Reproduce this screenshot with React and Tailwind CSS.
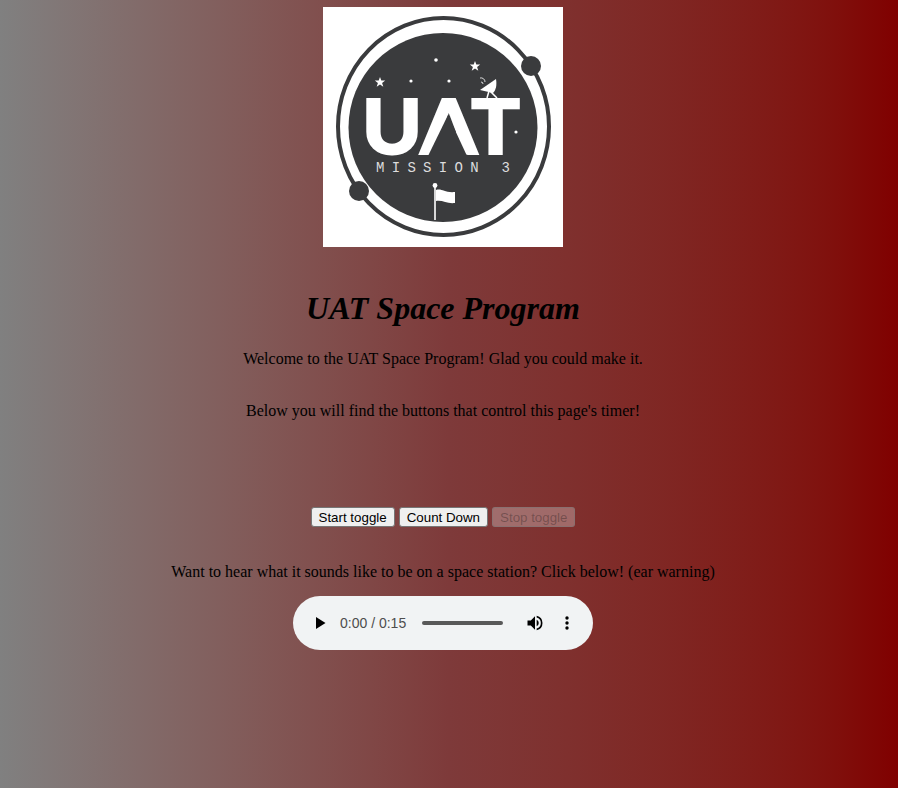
function Logo() {
  return (
    <svg width="240" height="240" viewBox="0 0 240 240" className="block">
      <rect width="240" height="240" fill="#ffffff" />
      <ellipse cx="120.5" cy="119.5" rx="105.5" ry="108.5" fill="none" stroke="#3a3b3d" strokeWidth="4" />
      <circle cx="120" cy="120.5" r="94.5" fill="#3a3b3d" />
      <circle cx="208" cy="59" r="10" fill="#3a3b3d" />
      <circle cx="36" cy="184" r="10" fill="#3a3b3d" />
      <g fill="#ffffff">
        <path d="M57 70l1.3 3.6 3.9 0-3.1 2.4 1.2 3.8-3.3-2.3-3.3 2.3 1.2-3.8-3.1-2.4 3.9 0z" />
        <path d="M152 54l1.3 3.6 3.9 0-3.1 2.4 1.2 3.8-3.3-2.3-3.3 2.3 1.2-3.8-3.1-2.4 3.9 0z" />
        <circle cx="113" cy="53" r="1.8" />
        <circle cx="88" cy="74" r="1.6" />
        <circle cx="126" cy="74" r="1.6" />
        <circle cx="193" cy="125" r="1.6" />
        <path d="M157 83l16-11c1 6 0 11-3 14z" />
      </g>
      <path d="M166 84l-2 7M167 84l7 7" stroke="#ffffff" strokeWidth="1.5" />
      <path d="M162 75a4 4 0 0 0-5-4M160 77a2 2 0 0 0-2-2" stroke="#ffffff" strokeWidth="0.8" fill="none" />
      <text x="118" y="147" textAnchor="middle" textLength="158" lengthAdjust="spacingAndGlyphs" fontFamily="Lato, sans-serif" fontWeight="900" fontSize="77" fill="#ffffff" stroke="#ffffff" strokeWidth="2">UAT</text>
      <path d="M125 108l19 41h-39z" fill="#3a3b3d" />
      <text x="120" y="165" textAnchor="middle" textLength="134" lengthAdjust="spacing" fontFamily="'Liberation Mono', monospace" fontSize="14" fill="#dddddd">MISSION 3</text>
      <path d="M112 180v33" stroke="#ffffff" strokeWidth="1.6" />
      <circle cx="112" cy="178.5" r="2.4" fill="#ffffff" />
      <path d="M113 183c6-2 8 3 19 2v11c-8 1-12-3-19-2z" fill="#ffffff" />
    </svg>
  );
}

function AudioBar() {
  return (
    <div className="mt-[15px] flex h-[54px] w-[300px] items-center rounded-[27px] bg-[#f1f3f4] font-['Liberation_Sans',sans-serif] text-[14px] text-[#4d4d4d]">
      <svg width="12" height="14" viewBox="0 0 12 14" className="ml-[21px]">
        <path d="M2 1v12l9.5-6z" fill="#000000" />
      </svg>
      <span className="ml-[14px] w-[67px] whitespace-nowrap">0:00 / 0:15</span>
      <div className="ml-[15px] h-[4px] w-[81px] rounded-full bg-[#595959]" />
      <svg width="20" height="20" viewBox="0 0 24 24" className="ml-[22px]">
        <path fill="#000000" d="M3 9v6h4l5 5V4L7 9H3zm13.5 3A4.5 4.5 0 0 0 14 7.97v8.05A4.5 4.5 0 0 0 16.5 12zM14 3.23v2.06a7 7 0 0 1 0 13.42v2.06a9 9 0 0 0 0-17.54z" />
      </svg>
      <svg width="4" height="14" viewBox="0 0 4 14" className="ml-[20px]">
        <circle cx="2" cy="2" r="1.7" fill="#000000" />
        <circle cx="2" cy="7" r="1.7" fill="#000000" />
        <circle cx="2" cy="12" r="1.7" fill="#000000" />
      </svg>
    </div>
  );
}

export default function App() {
  return (
    <div className="flex h-[788px] flex-col items-center overflow-hidden bg-gradient-to-r from-[#808080] via-[#7e3a3a] via-50% to-[#800000] pr-[12px] pt-[7px] font-['Liberation_Serif',serif] text-[16px] text-black">
      <Logo />
      <h1 className="mt-[43px] text-[32px] font-bold italic leading-[37px]">UAT Space Program</h1>
      <p className="mt-[23px] leading-[18px]">Welcome to the UAT Space Program! Glad you could make it.</p>
      <p className="mt-[34px] leading-[18px]">Below you will find the buttons that control this page's timer!</p>
      <div className="mt-[87px] flex gap-[4px] font-['Liberation_Sans',sans-serif] text-[13.33px] leading-[15px]">
        <button className="h-[20px] rounded-[3px] border border-[#767676] bg-[#efefef] px-[7px] text-black">Start toggle</button>
        <button className="h-[20px] rounded-[3px] border border-[#767676] bg-[#efefef] px-[7px] text-black">Count Down</button>
        <button disabled className="h-[20px] rounded-[3px] border border-[#76767680] bg-[#efefef4d] px-[7px] text-[#10101050]">Stop toggle</button>
      </div>
      <p className="mt-[36px] leading-[18px]">Want to hear what it sounds like to be on a space station? Click below! (ear warning)</p>
      <AudioBar />
    </div>
  );
}
